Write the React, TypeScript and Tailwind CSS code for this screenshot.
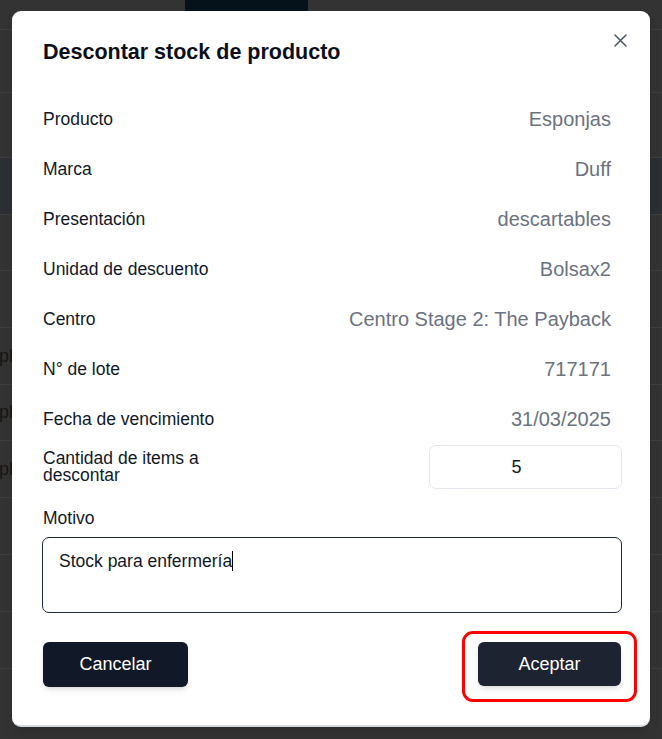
import React from "react";

const rows: [string, string][] = [
  ["Producto", "Esponjas"],
  ["Marca", "Duff"],
  ["Presentación", "descartables"],
  ["Unidad de descuento", "Bolsax2"],
  ["Centro", "Centro Stage 2: The Payback"],
  ["N° de lote", "717171"],
  ["Fecha de vencimiento", "31/03/2025"],
];

function BgRow({ h, band, p }: { h: string; band?: boolean; p?: boolean }) {
  return (
    <div
      className={`${h} border-b border-[#3e3e3e] flex items-center ${band ? "bg-[#2c2f33]" : ""}`}
    >
      {p ? <span className="text-[18px] text-[#161616] -ml-[1px]">pl</span> : null}
    </div>
  );
}

export default function App() {
  return (
    <div
      className="relative w-[662px] h-[739px] overflow-hidden bg-[#333333]"
      style={{ fontFamily: '"Liberation Sans", Arial, sans-serif' }}
    >
      {/* underlying page (dimmed) */}
      <div className="flex flex-col">
        <div className="h-[30px] border-b border-[#3e3e3e] flex">
          <div className="w-[185px]" />
          <div className="w-[123px] h-[11px] bg-[#06121a]" />
        </div>
        <BgRow h="h-[63px]" />
        <BgRow h="h-[65px]" />
        <BgRow h="h-[57px]" band />
        <BgRow h="h-[56px]" />
        <BgRow h="h-[57px]" />
        <BgRow h="h-[57px]" p />
        <BgRow h="h-[56px]" p />
        <BgRow h="h-[57px]" p />
        <BgRow h="h-[57px]" />
        <BgRow h="h-[57px]" />
        <BgRow h="h-[57px]" />
        <div className="flex-1 bg-[#262626]" />
      </div>

      {/* modal */}
      <div className="absolute left-[12px] top-[11px] w-[638px] h-[716px] bg-white rounded-[9px] shadow-lg border-b-2 border-[#d6dbe3]">
        <button className="absolute right-[22px] top-[22px] text-[#4b5563]">
          <svg width="15" height="15" viewBox="0 0 15 15" fill="none">
            <path d="M2 2L13 13M13 2L2 13" stroke="currentColor" strokeWidth="1.5" strokeLinecap="round" />
          </svg>
        </button>
        <div className="pl-[31px] pr-[28px] pt-[27px] flex flex-col">
          <h2 className="text-[21.5px] font-bold text-[#0b0f1a] leading-[28px]">
            Descontar stock de producto
          </h2>
          <div className="mt-[28px] flex flex-col">
            {rows.map(([l, v]) => (
              <div key={l} className="h-[50px] flex items-center justify-between pr-[11px]">
                <span className="text-[17.5px] text-[#111827]">{l}</span>
                <span className="text-[20px] text-[#6b7280]">{v}</span>
              </div>
            ))}
            <div className="h-[44px] flex items-center justify-between mt-[1px]">
              <span className="text-[17.5px] text-[#111827] leading-[17px] w-[170px]">
                Cantidad de items a descontar
              </span>
              <div className="w-[193px] h-[44px] border border-[#e3e7ef] rounded-[7px] flex items-center justify-center pr-[18px] text-[18px] text-[#111827]">
                5
              </div>
            </div>
            <span className="mt-[18px] text-[17.5px] text-[#111827] leading-[22px]">Motivo</span>
            <div className="mt-[8px] -ml-[1px] h-[76px] border border-[#1f2937] rounded-[7px] px-[16px] pt-[10px]">
              <span className="text-[17.5px] text-[#111827]">Stock para enfermería</span>
              <span className="inline-block w-[1px] h-[20px] bg-black align-[-4px]" />
            </div>
            <div className="mt-[29px] flex justify-between">
              <button className="w-[145px] h-[45px] rounded-[6px] bg-[#111827] text-white text-[18px] shadow-md">
                Cancelar
              </button>
              <div className="relative mr-[1px]">
                <button className="w-[143px] h-[44px] rounded-[6px] bg-[#1e2332] text-white text-[18px] shadow-md">
                  Aceptar
                </button>
                <div className="absolute left-[-16px] right-[-16px] top-[-11px] bottom-[-15px] border-[3px] border-[#ff0000] rounded-[11px] pointer-events-none" />
              </div>
            </div>
          </div>
        </div>
      </div>
    </div>
  );
}
